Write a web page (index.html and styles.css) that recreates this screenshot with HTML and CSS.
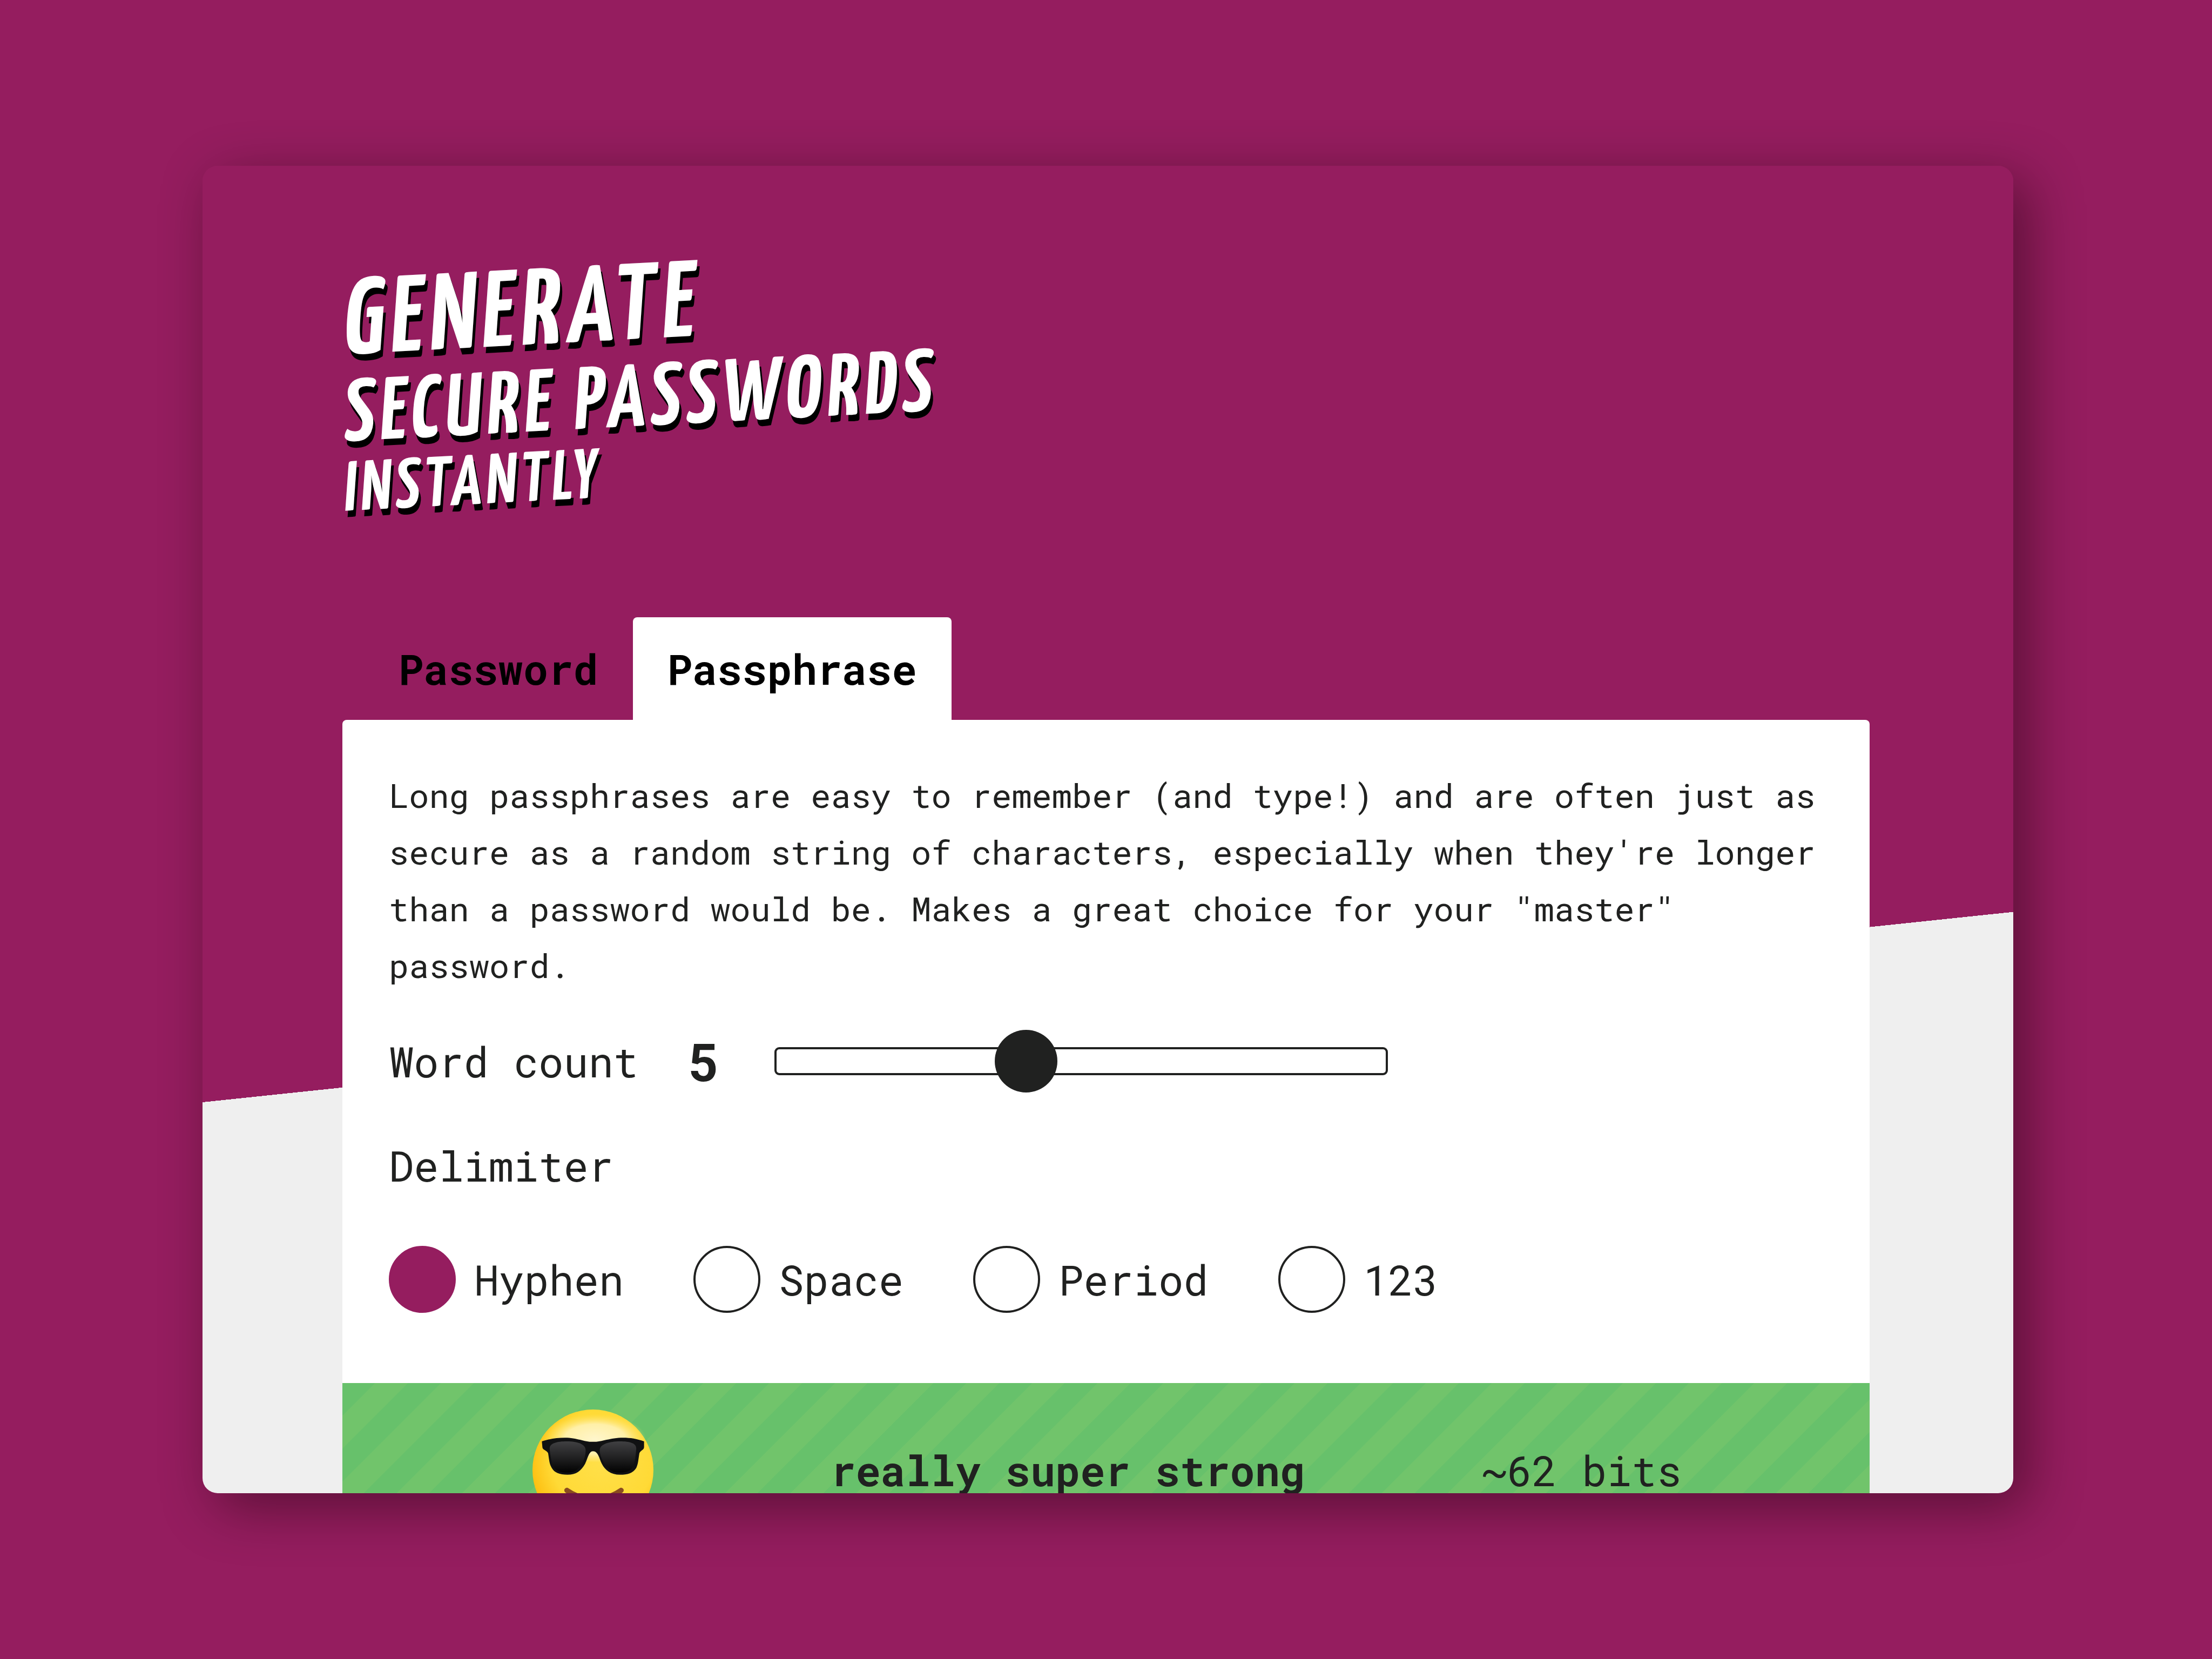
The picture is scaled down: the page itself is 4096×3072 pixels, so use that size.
FILE: index.html
```html
<!DOCTYPE html>
<html lang="en">
<head>
  <meta charset="utf-8">
  <meta name="viewport" content="width=device-width, initial-scale=1">
  <title>Generate secure passwords instantly</title>
  <link rel="stylesheet" href="styles.css">
</head>
<body>
  <main class="window">
    <h1 class="headline">
      <span class="headline-line headline-large">Generate</span>
      <span class="headline-line headline-medium">Secure passwords</span>
      <span class="headline-line headline-small">Instantly</span>
    </h1>

    <div class="tabs" role="tablist">
      <button class="tab" type="button" role="tab" aria-selected="false">Password</button>
      <button class="tab tab-active" type="button" role="tab" aria-selected="true">Passphrase</button>
    </div>

    <section class="panel">
      <form class="options">
        <p class="intro">Long passphrases are easy to remember (and type!) and are often just as secure as a random string of characters, especially when they're longer than a password would be. Makes a great choice for your "master" password.</p>

        <div class="count">
          <label for="word-count">Word count</label>
          <output class="count-value" for="word-count">5</output>
          <input class="slider" id="word-count" type="range" min="3" max="8" value="5">
        </div>

        <fieldset class="delimiter">
          <legend>Delimiter</legend>
          <div class="choices">
            <label class="choice"><input type="radio" name="delimiter" checked>Hyphen</label>
            <label class="choice"><input type="radio" name="delimiter">Space</label>
            <label class="choice"><input type="radio" name="delimiter">Period</label>
            <label class="choice"><input type="radio" name="delimiter">123</label>
          </div>
        </fieldset>
      </form>

      <div class="strength">
        <svg class="face" viewBox="0 0 232 232" aria-hidden="true">
          <defs>
            <radialGradient id="skin" cx="0.58" cy="0.42" r="0.6">
              <stop offset="0" stop-color="#ffe04a"/>
              <stop offset="0.7" stop-color="#ffda36"/>
              <stop offset="1" stop-color="#fdc012"/>
            </radialGradient>
            <radialGradient id="shine" cx="0.5" cy="0.55" r="0.5">
              <stop offset="0" stop-color="#fff6cc"/>
              <stop offset="0.6" stop-color="#fff2b4" stop-opacity="0.9"/>
              <stop offset="1" stop-color="#ffe36a" stop-opacity="0"/>
            </radialGradient>
            <linearGradient id="lens" x1="0" y1="0" x2="0" y2="1">
              <stop offset="0" stop-color="#404042"/>
              <stop offset="0.5" stop-color="#222223"/>
              <stop offset="1" stop-color="#020202"/>
            </linearGradient>
          </defs>
          <circle cx="116" cy="116" r="116" fill="url(#skin)"/>
          <ellipse cx="120" cy="52" rx="98" ry="48" fill="url(#shine)"/>
          <path d="M66 155Q118 190 170 155" fill="none" stroke="#8a4b20" stroke-width="10" stroke-linecap="round"/>
          <path d="M18 61C34 56 46 54 62 54C86 54 98 62 116 62C134 62 148 54 174 54C188 54 200 56 214 61V72C214 78 207 78 205 84C203 96 203 104 199 112C193 122 182 125 168 125C150 125 139 116 133 104C128 94 126 80 116 80C108 80 106 94 101 104C93 118 84 125 67 125C52 125 42 121 37 112C32 104 32 96 30 84C28 78 19 78 19 72Z" fill="#101112"/>
          <path d="M66 61C86 61 102 66 102 78C102 92 96 104 89 112C83 119 76 121 67 121C54 121 44 118 40 109C36 100 34 86 33 76C32 64 48 61 66 61Z" fill="url(#lens)"/>
          <path d="M168 61C186 61 200 64 199 76C198 86 197 100 193 109C189 118 180 121 167 121C158 121 151 119 145 112C138 104 129 92 129 78C129 66 148 61 168 61Z" fill="url(#lens)"/>
        </svg>
        <strong>really super strong</strong>
        <span>~62 bits</span>
      </div>
    </section>
  </main>
</body>
</html>
```
FILE: styles.css
```css
:root {
  --brand: #951d5f;
  --ink: #202120;
  --paper: #efefef;
}

* {
  box-sizing: border-box;
}

body {
  margin: 0;
  min-height: 100vh;
  padding: 10vh 368px 10vh 375px;
  overflow: hidden;
  background: var(--brand);
  color: var(--ink);
  font-family: "Roboto Mono", "Liberation Mono", monospace;
  font-size: 77px;
  line-height: 102px;
}

.window {
  height: 80vh;
  padding: 200px 266px 0 259px;
  overflow: hidden;
  border-radius: 28px;
  background: linear-gradient(174deg, var(--brand) 61.7%, var(--paper) 61.7%);
  box-shadow: 26px 26px 100px rgba(20, 0, 5, 0.45);
}

.headline {
  display: flex;
  flex-direction: column;
  margin: 0 0 170px;
  padding-left: 4px;
  color: #fff;
  font-family: "Yanone Kaffeesatz", "Open Sans Condensed", "Roboto Condensed", "Liberation Sans Narrow", "DejaVu Sans Condensed", sans-serif;
  font-weight: 700;
  text-shadow: 5px 12px 0 #000;
  text-transform: uppercase;
}

.headline-line {
  letter-spacing: 0.06em;
  transform: skew(-4deg, -3deg);
  transform-origin: left;
}

.headline-large {
  font-size: 201px;
  line-height: 190px;
}

.headline-medium {
  font-size: 164px;
  line-height: 153px;
}

.headline-small {
  font-size: 131px;
  line-height: 123px;
}

.tabs {
  display: flex;
  padding-left: 40px;
}

.tab {
  height: 190px;
  padding: 0 64px;
  border: 0;
  border-radius: 8px 8px 0 0;
  background: none;
  color: #000;
  font: inherit;
  font-weight: 700;
}

.tab-active {
  background: #fff;
}

.panel {
  border-radius: 8px;
  background: #fff;
}

.options {
  padding: 87px 86px 130px;
}

.intro {
  margin: 0 0 67px;
  font-size: 62px;
  line-height: 105px;
}

.count {
  display: flex;
  align-items: center;
  height: 116px;
}

.count-value {
  margin: 0 102px 0 92px;
  font-size: 96px;
  font-weight: 700;
}

.slider {
  appearance: none;
  width: 1136px;
  height: 116px;
  margin: 0;
  background: none;
}

.slider::-webkit-slider-runnable-track {
  height: 52px;
  border: 4px solid var(--ink);
  border-radius: 9px;
}

.slider::-webkit-slider-thumb {
  appearance: none;
  width: 116px;
  height: 116px;
  margin-top: -36px;
  border-radius: 50%;
  background: var(--ink);
}

.delimiter {
  margin: 84px 0 0;
  padding: 0;
  border: 0;
}

.delimiter legend {
  padding: 0;
}

.choices {
  display: flex;
  gap: 129px;
  padding-top: 98px;
}

.choice {
  display: flex;
  align-items: center;
  gap: 34px;
}

.choice input {
  appearance: none;
  width: 124px;
  height: 124px;
  margin: 0;
  border: 4px solid var(--ink);
  border-radius: 50%;
}

.choice input:checked {
  border-color: var(--brand);
  background: var(--brand);
}

.strength {
  display: flex;
  align-items: center;
  justify-content: space-between;
  height: 322px;
  padding: 0 348px 0 352px;
  background: repeating-linear-gradient(135deg, #67c16b 0 43px, #71c46b 43px 86px);
}

.face {
  width: 224px;
  height: 224px;
}
```
